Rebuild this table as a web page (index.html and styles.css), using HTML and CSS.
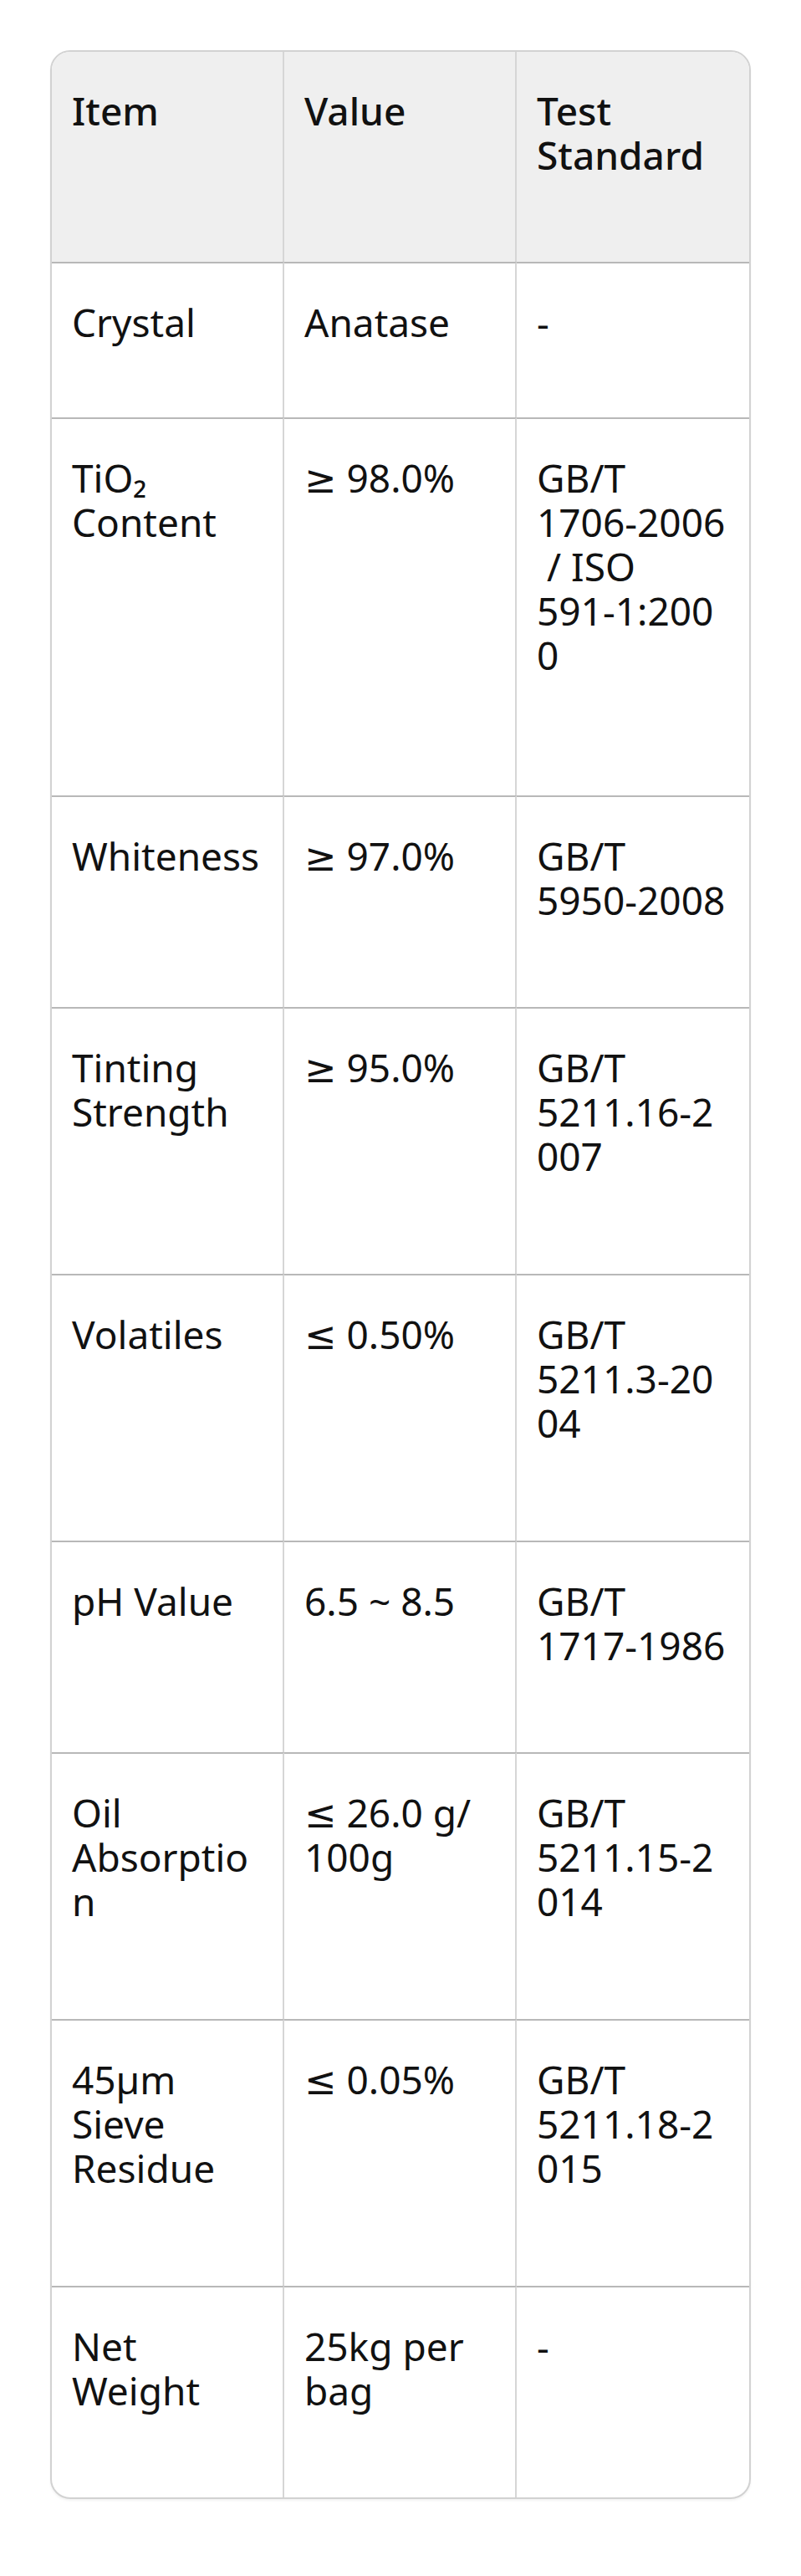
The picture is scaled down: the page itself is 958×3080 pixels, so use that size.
FILE: index.html
```html
<!DOCTYPE html>
<html lang="en">
<head>
<meta charset="utf-8">
<title>Specification</title>
<link rel="stylesheet" href="styles.css">
</head>
<body>
<div class="page">
  <div class="card">
    <table class="spec">
      <thead>
        <tr class="r2"><th>Item</th><th>Value</th><th>Test Standard</th></tr>
      </thead>
      <tbody>
        <tr class="r1"><td>Crystal</td><td>Anatase</td><td>-</td></tr>
        <tr class="r5"><td>TiO₂ Content</td><td>≥ 98.0%</td><td>GB/T 1706‑2006&nbsp;/ ISO 591‑1:2000</td></tr>
        <tr class="r2"><td>Whiteness</td><td>≥ 97.0%</td><td>GB/T 5950‑2008</td></tr>
        <tr class="r3"><td>Tinting Strength</td><td>≥ 95.0%</td><td>GB/T 5211.16‑2007</td></tr>
        <tr class="r3"><td>Volatiles</td><td>≤ 0.50%</td><td>GB/T 5211.3‑2004</td></tr>
        <tr class="r2"><td>pH Value</td><td>6.5 ~ 8.5</td><td>GB/T 1717‑1986</td></tr>
        <tr class="r3"><td>Oil Absorption</td><td>≤ 26.0 g/<wbr>100g</td><td>GB/T 5211.15‑2014</td></tr>
        <tr class="r3"><td>45µm Sieve Residue</td><td>≤ 0.05%</td><td>GB/T 5211.18‑2015</td></tr>
        <tr class="r2"><td>Net Weight</td><td>25kg per bag</td><td>-</td></tr>
      </tbody>
    </table>
  </div>
</div>
</body>
</html>
```

FILE: styles.css
```css
html, body {
  margin: 0;
  padding: 0;
  background: #ffffff;
}

.page {
  padding: 60px 60px 90px;
  font-family: "Noto Sans", "DejaVu Sans", sans-serif;
  color: #111111;
}

.card {
  border: 2px solid #d2d2d2;
  border-radius: 24px;
  overflow: hidden;
  background: #ffffff;
  box-shadow: 0 2px 3px rgba(0, 0, 0, 0.05);
}

.spec {
  width: 100%;
  table-layout: fixed;
  border-collapse: separate;
  border-spacing: 0;
}

.spec th,
.spec td {
  padding: 44px 20px 0 24px;
  vertical-align: top;
  text-align: left;
  font-size: 46px;
  line-height: 53px;
  border-right: 2px solid #d6d6d6;
  overflow-wrap: anywhere;
}

.spec th:last-child,
.spec td:last-child {
  border-right: none;
}

.spec th {
  background: #efefef;
  font-weight: 500;
}

.spec td {
  font-weight: 400;
  border-top: 2px solid #b8b8b8;
}

.r1 > td, .r1 > th { padding-bottom: 87px; }
.r2 > td, .r2 > th { padding-bottom: 101px; }
.r3 > td, .r3 > th { padding-bottom: 114px; }
.r5 > td, .r5 > th { padding-bottom: 141px; }
```
